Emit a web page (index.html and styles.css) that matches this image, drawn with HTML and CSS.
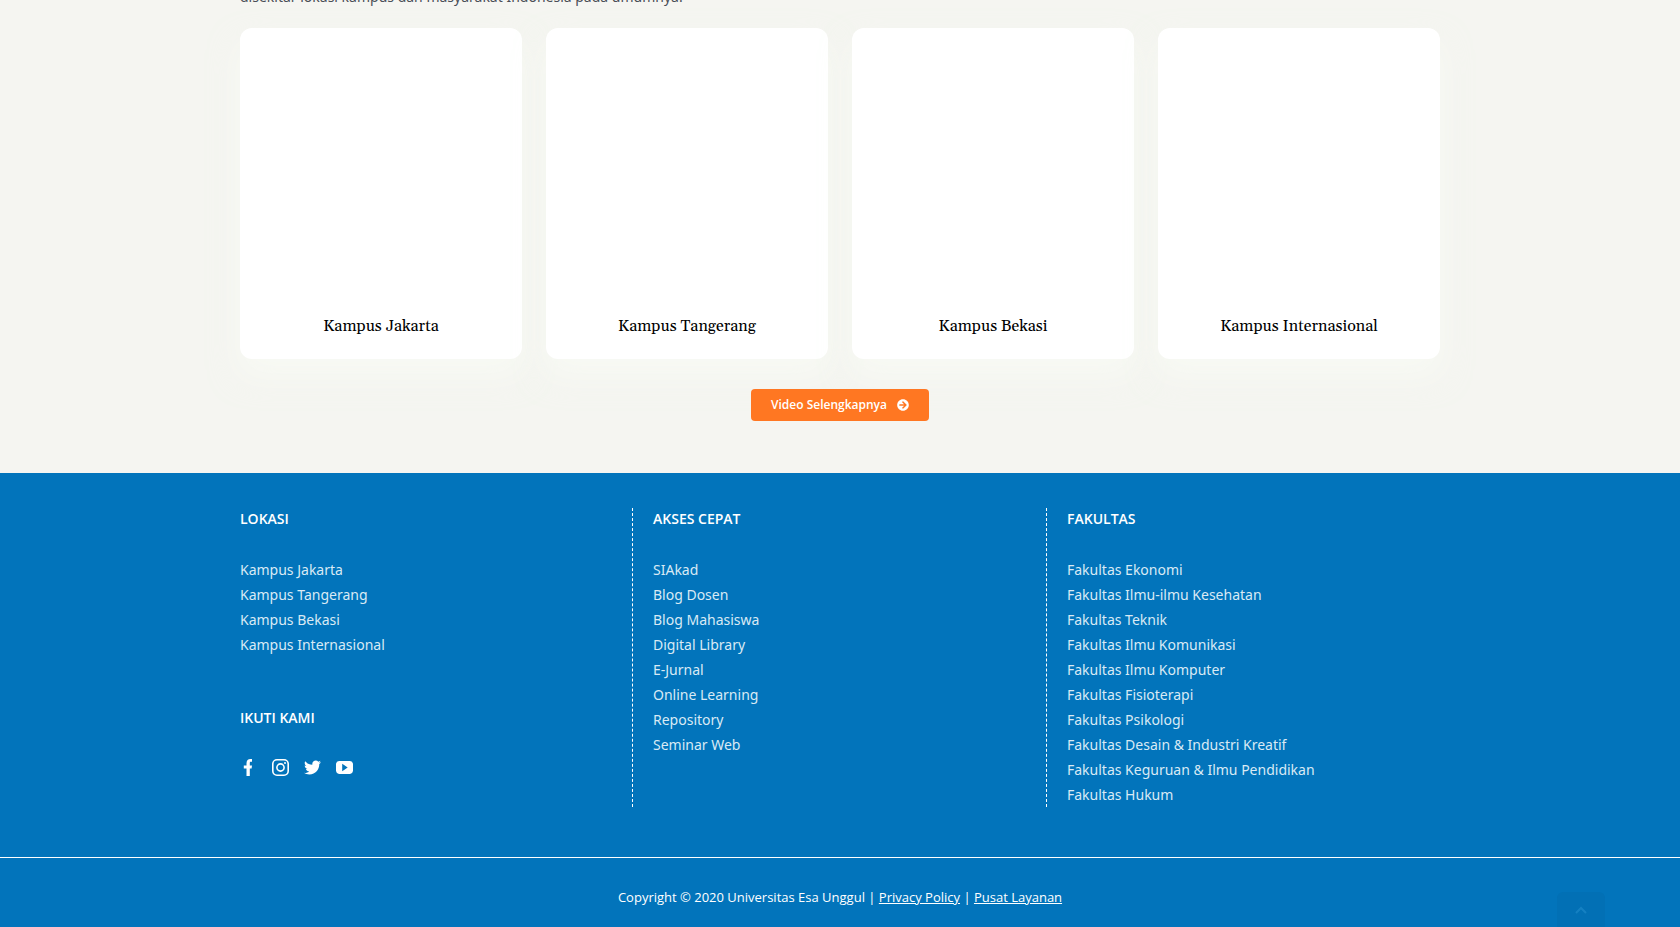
FILE: index.html
```html
<!DOCTYPE html>
<html lang="id">
<head>
<meta charset="utf-8">
<meta name="viewport" content="width=device-width, initial-scale=1">
<title>Universitas Esa Unggul</title>
<link rel="stylesheet" href="styles.css">
</head>
<body>
<main class="campus">
  <div class="container">
    <p class="campus-intro">disekitar lokasi kampus dan masyarakat Indonesia pada umumnya.</p>
    <div class="cards">
      <article class="card"><h3 class="card-title">Kampus Jakarta</h3></article>
      <article class="card"><h3 class="card-title">Kampus Tangerang</h3></article>
      <article class="card"><h3 class="card-title">Kampus Bekasi</h3></article>
      <article class="card"><h3 class="card-title">Kampus Internasional</h3></article>
    </div>
    <div class="more">
      <a class="button" href="#">Video Selengkapnya
        <svg class="button-icon" viewBox="0 0 512 512" aria-hidden="true"><path d="M256 8c137 0 248 111 248 248S393 504 256 504 8 393 8 256 119 8 256 8zm-28.900 143.600l75.500 72.400H120c-13.300 0-24 10.700-24 24v16c0 13.300 10.700 24 24 24h182.600l-75.500 72.400c-9.700 9.300-9.900 24.800-.4 34.300l11 10.900c9.400 9.400 24.600 9.400 33.900 0L404.300 273c9.400-9.400 9.400-24.600 0-33.900L271.600 106.300c-9.400-9.400-24.600-9.400-33.900 0l-11 10.900c-9.500 9.600-9.300 25.100.4 34.400z"/></svg>
      </a>
    </div>
  </div>
</main>
<footer class="footer">
  <div class="container footer-columns">
    <section class="column">
      <h4 class="column-title">LOKASI</h4>
      <ul class="links">
        <li><a href="#">Kampus Jakarta</a></li>
        <li><a href="#">Kampus Tangerang</a></li>
        <li><a href="#">Kampus Bekasi</a></li>
        <li><a href="#">Kampus Internasional</a></li>
      </ul>
      <h4 class="column-title follow-title">IKUTI KAMI</h4>
      <div class="social">
        <a href="#" aria-label="Facebook"><svg viewBox="0 0 17 17"><path d="M6.500 17V9.500H3.800V6.500H6.500V4.200C6.500 1.500 8 0 10.500 0H12V2.800H10.900C10 2.800 9.800 3.300 9.800 4.200V6.500H12L11.600 9.500H9.800V17z"/></svg></a>
        <a href="#" aria-label="Instagram"><svg viewBox="0 0 17 17"><rect class="stroke" x=".8" y=".8" width="15.400" height="15.400" rx="4.200"/><circle class="stroke" cx="8.500" cy="8.500" r="3.600"/><circle cx="13" cy="4" r="1"/></svg></a>
        <a href="#" aria-label="Twitter"><svg viewBox="0 0 512 512"><path d="M459.400 151.700c.3 4.500.3 9.100.3 13.600 0 138.700-105.600 298.600-298.600 298.600-59.500 0-114.700-17.200-161.100-47.100 8.400 1 16.600 1.300 25.300 1.300 49.100 0 94.200-16.600 130.300-44.800-46.100-1-84.800-31.200-98.100-72.800 6.500 1 13 1.600 19.800 1.600 9.400 0 18.800-1.300 27.600-3.600-48.100-9.700-84.100-52-84.100-103v-1.300c14 7.800 30.200 12.700 47.400 13.300-28.300-18.800-46.800-51-46.800-87.400 0-19.500 5.200-37.400 14.300-53 51.700 63.700 129.300 105.300 216.400 109.800-1.600-7.800-2.600-15.900-2.600-24 0-57.800 46.800-104.900 104.900-104.900 30.200 0 57.500 12.700 76.700 33.100 23.700-4.500 46.500-13.300 66.600-25.300-7.800 24.400-24.400 44.800-46.100 57.800 21.100-2.300 41.600-8.100 60.400-16.200-14.300 20.800-32.200 39.300-52.600 54.300z"/></svg></a>
        <a href="#" aria-label="YouTube"><svg viewBox="0 0 17 17"><path fill-rule="evenodd" d="M3 2.100Q8.500 1.700 14 2.100Q16.600 2.300 17 5V12Q16.600 14.700 14 14.900Q8.500 15.300 3 14.900Q.4 14.700 0 12V5Q.4 2.300 3 2.100zM6.200 4.800V12.200L11.700 8.500z"/></svg></a>
      </div>
    </section>
    <section class="column">
      <h4 class="column-title">AKSES CEPAT</h4>
      <ul class="links">
        <li><a href="#">SIAkad</a></li>
        <li><a href="#">Blog Dosen</a></li>
        <li><a href="#">Blog Mahasiswa</a></li>
        <li><a href="#">Digital Library</a></li>
        <li><a href="#">E-Jurnal</a></li>
        <li><a href="#">Online Learning</a></li>
        <li><a href="#">Repository</a></li>
        <li><a href="#">Seminar Web</a></li>
      </ul>
    </section>
    <section class="column">
      <h4 class="column-title">FAKULTAS</h4>
      <ul class="links">
        <li><a href="#">Fakultas Ekonomi</a></li>
        <li><a href="#">Fakultas Ilmu-ilmu Kesehatan</a></li>
        <li><a href="#">Fakultas Teknik</a></li>
        <li><a href="#">Fakultas Ilmu Komunikasi</a></li>
        <li><a href="#">Fakultas Ilmu Komputer</a></li>
        <li><a href="#">Fakultas Fisioterapi</a></li>
        <li><a href="#">Fakultas Psikologi</a></li>
        <li><a href="#">Fakultas Desain &amp; Industri Kreatif</a></li>
        <li><a href="#">Fakultas Keguruan &amp; Ilmu Pendidikan</a></li>
        <li><a href="#">Fakultas Hukum</a></li>
      </ul>
    </section>
  </div>
  <p class="copyright">Copyright © 2020 Universitas Esa Unggul | <a href="#">Privacy Policy</a> | <a href="#">Pusat Layanan</a></p>
</footer>
<a class="to-top" href="#" aria-label="Kembali ke atas"><svg viewBox="0 0 12 8"><path d="M1 7l5-5 5 5"/></svg></a>
</body>
</html>
```

FILE: styles.css
```css
* { box-sizing: border-box; }

body {
  margin: 0;
  background: #0274bb;
  font-family: "Open Sans", "Noto Sans", sans-serif;
  font-size: 14px;
  line-height: 25px;
  overflow: hidden;
}

h3, h4, p, ul { margin: 0; padding: 0; }

.container {
  max-width: 1200px;
  margin: 0 auto;
}

.campus {
  background: #f5f5f1;
  padding-bottom: 52px;
  overflow: hidden;
}

/* The end of the intro paragraph is cut by the top of the view. */
.campus-intro {
  margin-top: -16px;
  color: #4a4e57;
  font-family: "Noto Sans", "Open Sans", sans-serif;
}

.cards {
  display: grid;
  grid-template-columns: repeat(4, 1fr);
  gap: 24px;
  margin-top: 19px;
}

.card {
  display: flex;
  flex-direction: column;
  justify-content: flex-end;
  min-height: 331px;
  padding: 20px;
  background: #fff;
  border-radius: 12px;
  box-shadow: 0 16px 30px rgba(252, 255, 248, 0.5);
}

.card-title {
  color: #000;
  font-family: Georgia, Gelasio, "Liberation Serif", serif;
  font-size: 16px;
  font-weight: 400;
  line-height: 26px;
  text-align: center;
}

.more {
  display: flex;
  justify-content: center;
  margin-top: 30px;
}

.button {
  position: relative;
  display: flex;
  align-items: center;
  gap: 10px;
  height: 32px;
  padding: 0 20px 1px;
  border-radius: 4px;
  background: #ff7722;
  color: #fff;
  font-size: 12px;
  font-weight: 600;
  text-decoration: none;
}

.button-icon {
  width: 12px;
  height: 12px;
  fill: currentColor;
}

.footer { color: #fff; }

.footer-columns {
  display: grid;
  grid-template-columns: 392fr 414fr 394fr;
  padding: 35px 0 50px;
}

.column + .column {
  padding-left: 20px;
  border-left: 1px dashed #fff;
}

.column-title {
  font-size: 14px;
  font-weight: 600;
  line-height: 21px;
}

.links {
  margin-top: 28px;
  font-family: "Noto Sans", "Open Sans", sans-serif;
  list-style: none;
}

.links a {
  color: #d9eaf5;
  text-decoration: none;
}

.follow-title { margin-top: 50px; }

.social {
  display: flex;
  gap: 15px;
  margin-top: 31px;
}

.social a {
  display: block;
  width: 17px;
  height: 17px;
}

.social svg {
  display: block;
  fill: #fff;
}

.social .stroke {
  fill: none;
  stroke: #fff;
  stroke-width: 1.6;
}

.copyright {
  padding: 27px 0;
  border-top: 1px solid #fff;
  font-size: 13px;
  text-align: center;
}

.copyright a { color: inherit; }

.to-top {
  position: fixed;
  right: 75px;
  bottom: 0;
  display: flex;
  justify-content: center;
  width: 48px;
  height: 35px;
  padding-top: 14px;
  border-radius: 6px 6px 0 0;
  background: #0270b5;
}

.to-top svg {
  width: 12px;
  height: 8px;
  fill: none;
  stroke: #1580c2;
  stroke-width: 2;
}
```
